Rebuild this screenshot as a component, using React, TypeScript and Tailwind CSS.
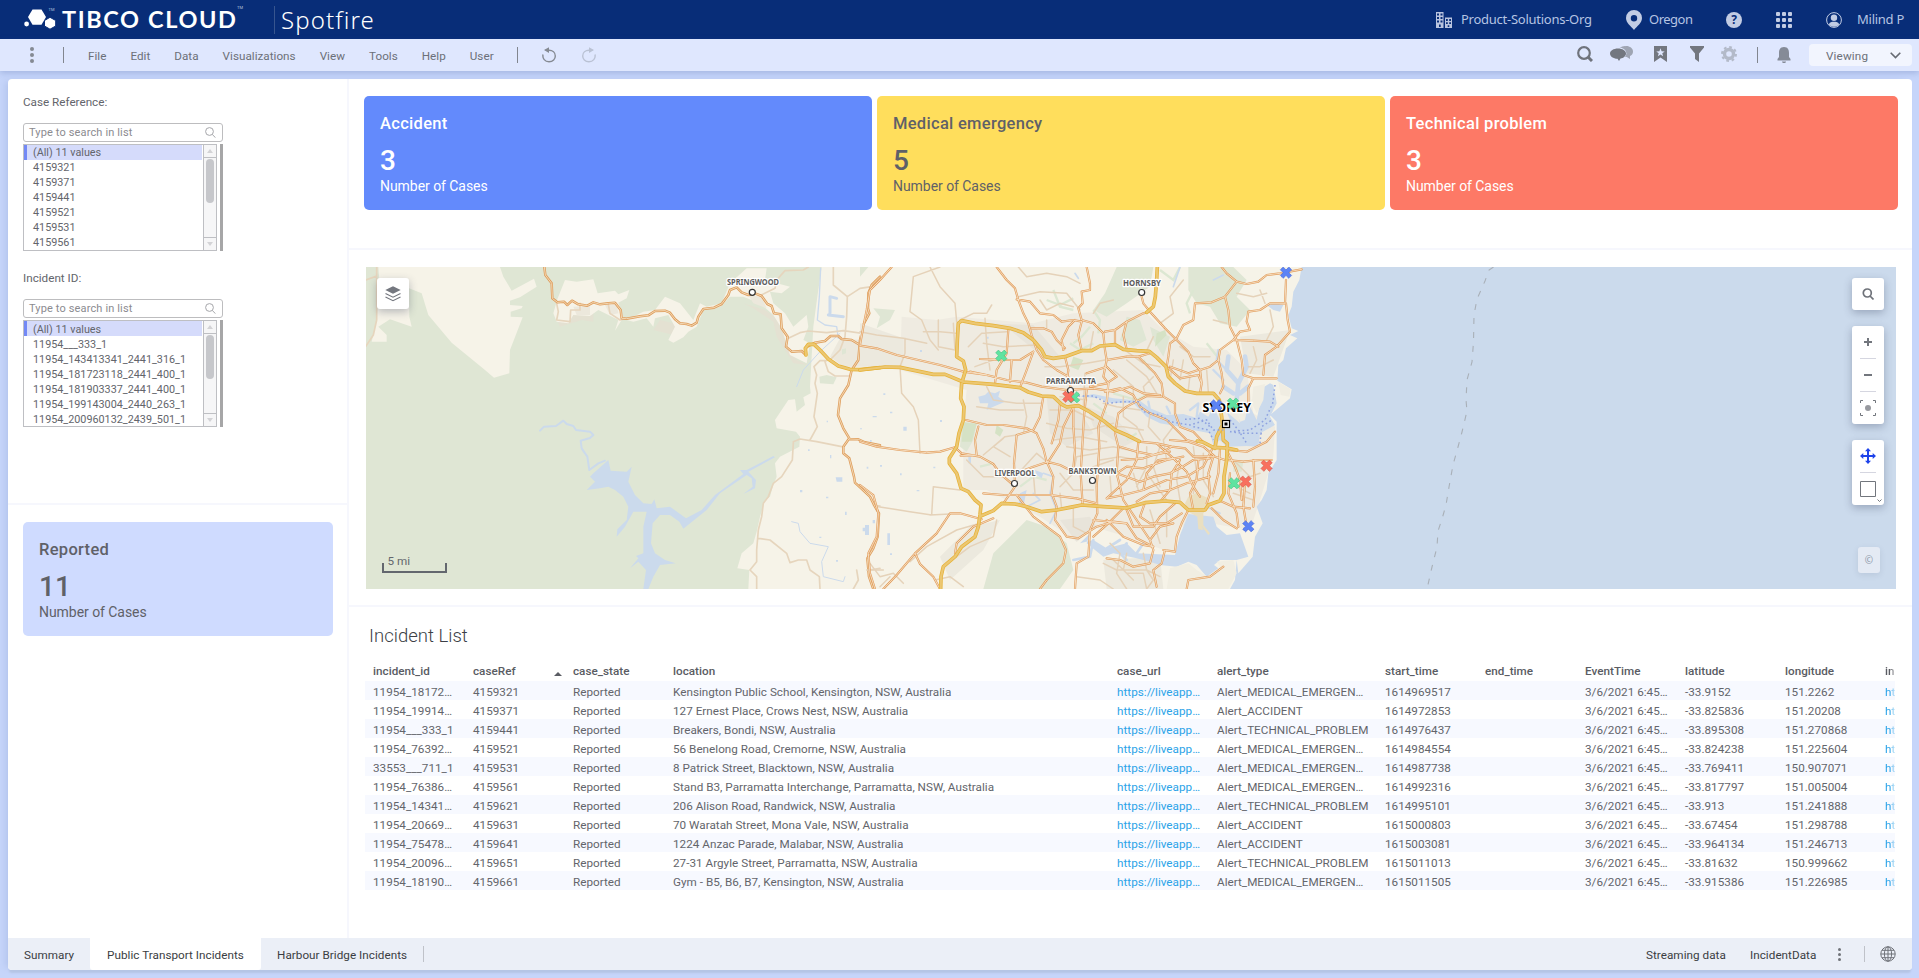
import type { ReactNode } from "react";

/* ---------- map drawing ---------- */

const WEST_HIGHWAYS = ["1338,285 1336,265 1345,253 1362,253 1380,270 1405,297 1435,318 1470,328 1500,329 1560,323"];

const WEST_ROADS = [
  "553,21 556,45 575,70 577,115 592,127 612,125 622,135 636,122 655,133 682,137 700,127 720,133 745,130 765,128 782,150 785,175 800,176 840,169 865,166 885,153 915,152 930,158 945,178 960,190 980,192 995,197 1010,188 1015,170 1030,147 1062,143 1085,132 1105,105 1110,90 1130,82 1145,97 1165,105 1185,100 1205,108 1222,132 1235,138 1242,160 1262,163 1265,205 1283,230 1278,260 1295,275 1325,273 1336,284",
  "1338,262 1365,248 1395,243 1412,228 1435,228 1445,237 1475,240 1495,252 1560,270",
  "1560,50 1535,75 1525,100 1524,145 1528,160 1512,190 1500,240 1495,300 1475,330 1465,375 1440,415 1434,465 1450,505 1468,535 1450,560 1450,580 1468,595 1482,650 1485,668 1530,710 1545,740 1557,760 1553,830 1540,865 1522,895 1527,950 1540,987",
  "1468,537 1495,538 1515,547 1560,556",
];

const WEST_MINOR = [
  "50,21 50,180 40,225 18,258",
  "18,60 50,48",
  "1200,107 1245,85 1250,60 1275,32 1330,30 1345,21",
  "1420,21 1420,75 1462,110 1460,170 1455,230 1440,270 1410,300",
  "1462,110 1500,85 1535,80",
  "1285,235 1320,218 1345,213 1400,218 1450,212 1560,228",
  "1400,302 1380,302 1362,320 1370,345 1365,370 1372,400 1362,470 1372,500 1350,540",
  "1395,305 1405,335 1425,348 1468,348",
  "1300,545 1320,537 1370,545 1445,560",
  "1300,548 1297,600 1265,650 1240,670 1225,710 1210,730 1205,770 1195,810 1190,870 1190,905 1170,930 1190,950 1190,987",
  "1195,835 1230,840 1280,880 1290,908 1315,900 1340,900 1350,930 1378,950 1380,987",
  "590,130 595,155 590,180 630,185 632,150 660,150 660,130",
  "745,133 750,160 780,180 800,175",
  "1480,987 1495,960 1490,930",
  "1540,735 1560,738",
  "1527,930 1560,925",
];

const EAST_HIGHWAYS = [
  "0,330 75,321 120,322 220,343 255,343 310,366 400,373 480,383 505,396 545,408 580,410 605,433 620,441 655,437 690,456 730,482 765,510 800,525 838,544",
  "242,987 243,950 250,920 285,890 305,860 345,830 355,800 360,765 363,735 345,720 325,695 303,685 290,640 268,610 268,595 290,560 297,520 310,480 312,440 302,415 305,370 317,330 310,303 290,290 292,240 295,190 305,182 345,190 400,197 450,205 490,218 520,240 545,270 555,290 580,295 615,290 665,272 695,272 720,258 765,254 790,268 830,272 868,274 890,292 918,320 925,350 945,370 975,393 1010,400 1060,400 1078,420 1085,470 1088,500 1090,540 1102,550 1100,600 1092,650 1092,700 1080,722 1045,735 1035,750 985,750 960,727 915,723 855,728 800,744 730,740 665,735 630,742 590,750 545,755 500,740 465,732 425,730 400,752 362,768",
  "892,21 890,60 886,110 880,140 860,157",
  "1085,500 1070,530 1065,565 1030,547 1012,543",
  "1065,562 1100,564 1130,570",
];

const EAST_ROADS = [
  "410,21 440,60 465,85 475,120 490,160 505,190 515,225 530,270 550,300 590,330 625,350 632,385",
  "680,21 690,70 690,90 665,95 668,130 655,145 665,180 700,190 730,220 735,270 740,300 730,350 745,370 740,430",
  "470,118 510,125 540,160 580,165 605,185 640,180 665,185",
  "515,205 550,205 575,215 590,240 615,265",
  "610,270 605,240 625,200 645,180",
  "735,215 765,210 800,185 850,160 870,155 915,205 950,240 985,275 1000,310 1020,330 1025,370",
  "845,110 850,130 870,155",
  "765,210 765,255",
  "920,320 925,290 930,250 950,235 970,195 1000,180 1005,130 1055,127 1095,110 1130,65 1160,72 1195,65 1220,45 1260,40 1325,28",
  "1130,65 1100,40 1085,21",
  "1095,110 1105,150 1110,200 1130,240 1145,300 1150,345 1180,355 1250,355",
  "1278,60 1275,130 1230,130 1200,150 1165,155 1160,185 1170,210 1140,215 1120,240 1080,270 1075,300 1050,320 1020,330",
  "1278,130 1283,180 1290,215 1250,260 1215,285 1210,345",
  "1120,240 1180,242 1230,245 1255,260",
  "1180,355 1165,385 1165,430",
  "1075,300 1085,340 1090,380 1080,400",
  "0,257 50,265 110,285 175,300 240,315 310,335 380,345 440,360 500,368 545,380 620,390 700,385 760,395 810,380 850,400 900,405",
  "0,545 50,560 120,570 200,578 240,575 285,562 305,580 360,590 400,612 420,640 465,680",
  "445,208 440,280 410,330 405,370",
  "360,297 440,300 480,300 520,275",
  "455,300 450,365",
  "550,410 540,470 520,510 470,525 462,610 465,670",
  "318,480 380,495 430,495 500,505 530,520 550,565 560,605",
  "302,587 350,585 345,540 355,500",
  "640,440 610,500 600,550 565,605 520,620 480,635 440,640",
  "640,440 640,500 645,570 640,625",
  "745,370 740,430 715,500 718,560 710,680 712,760 690,810 685,890 650,910 645,987",
  "560,605 600,615 640,635 700,640 770,640 800,620 850,625 920,600 970,590",
  "560,605 580,650 575,700 590,740 585,780 620,830 655,835 710,800 760,785 800,790",
  "370,700 430,705 500,705 570,705 650,715 710,730",
  "465,680 430,730",
  "470,705 520,770 560,800 600,830 618,870 610,910 560,960 540,987",
  "835,545 890,550 935,560 975,565 1000,590 1060,590",
  "735,395 780,385 820,405 840,440 870,460 920,480 950,510 980,540 1010,548",
  "835,290 885,340 905,370 910,410 945,430 945,460 960,500",
  "740,300 800,290 835,290 870,280",
  "680,340 740,320 770,350 740,370 690,380",
  "775,460 765,520 775,560 770,640 790,720 830,780 870,840 880,870",
  "600,430 595,480 575,550",
  "835,545 830,600 800,660 740,715",
  "770,640 840,665 880,650 930,640 960,625 1000,600 1050,595",
  "740,715 790,705 850,690 920,660 980,650 1030,620 1060,560",
  "830,725 870,700 930,690 980,670 1050,650",
  "890,550 940,595 980,635 1000,680 1020,710",
  "930,540 985,545 1030,560 1065,590 1095,600",
  "1060,590 1045,640 1050,700 1040,730",
  "1080,565 1075,640 1060,700",
  "1102,600 1150,605 1200,600 1235,600",
  "1102,570 1160,575 1200,555 1220,545 1245,515",
  "1110,640 1105,700 1130,760 1135,800",
  "1155,670 1150,740 1160,800",
  "1180,600 1185,680 1180,740",
  "1100,570 1125,620 1140,660 1145,720",
  "1080,722 1120,740 1170,745",
  "1055,745 1090,780 1130,805",
  "985,750 965,790 950,830 945,875 910,870",
  "945,730 900,770 880,800 820,800 800,750",
  "855,728 840,770 870,790 920,790 965,760",
  "915,870 905,910 880,930 890,980",
  "880,860 830,835 800,790 700,780",
  "880,870 870,910 820,920 780,900 740,895",
  "1090,920 1050,950 985,960 980,987",
  "95,21 60,60 30,90 20,150 10,200 0,255",
  "0,675 40,705 55,760 50,830 25,880 30,940 45,987",
  "365,778 300,760 270,760 230,820 165,880 110,945 70,987",
  "165,880 180,912 220,950 240,987",
  "285,880 290,850 340,800 400,775",
  "380,345 330,335",
  "920,320 960,355 1015,345 1025,370 1020,400",
  "680,390 672,470 668,540 662,640 668,735",
  "520,275 500,330 480,383",
  "615,290 625,330 620,370",
  "665,272 655,225 665,185",
  "800,268 790,225 800,185",
  "930,320 985,340 1015,330",
  "905,410 860,408 800,440 775,460",
  "960,500 1000,515 1030,547",
  "780,560 830,575 880,585 930,575",
  "785,600 850,595 910,575 935,560",
  "850,690 860,640 895,600 940,595",
  "1000,750 990,700 1010,660 1015,600",
  "900,725 930,690 935,640 960,600",
  "870,840 900,800 940,790",
  "740,780 790,830 850,855 880,860",
  "700,830 745,790 790,745",
];

const EAST_MINOR = [
  "240,21 160,50 150,155 185,180 210,240 235,270",
  "210,21 240,80 285,130 290,185",
  "190,215 240,215 290,220",
  "235,180 235,260 285,270 280,190",
  "0,215 50,225 130,235 200,250",
  "135,235 135,280 120,320 125,400 160,440 175,480 180,580",
  "300,180 340,160 380,160 395,135",
  "375,175 380,250 390,330",
  "325,260 365,220 440,215",
  "370,250 430,260 530,255",
  "345,320 400,300",
  "475,110 540,95 620,100 660,150",
  "475,21 500,50 560,40 620,50 660,70",
  "540,120 560,150 600,130 640,140",
  "370,585 435,530 470,525",
  "430,535 400,560 450,590",
  "320,600 370,650 440,650",
  "475,640 530,580 560,605",
  "215,765 220,680 300,690",
  "210,765 270,762",
  "55,740 150,755 215,765",
  "360,790 290,810 200,860 150,905",
  "290,890 330,860 400,830 410,780",
  "570,450 640,450 700,480",
  "560,490 620,505 690,510 760,490",
  "580,540 660,530 740,545",
  "600,640 640,690 700,690",
  "600,680 640,640 650,590 710,580",
  "720,600 780,590 830,600",
  "640,740 640,800 680,820",
  "700,620 760,600",
  "800,300 860,350 890,400",
  "780,260 850,310 900,320",
  "760,330 820,380 820,430",
  "675,340 670,440 690,450",
  "600,410 680,420",
  "790,410 790,470 830,500 850,540",
  "870,460 865,500 900,540",
  "860,560 860,620 830,680",
  "900,560 880,620 900,680",
  "940,500 910,540 920,600",
  "960,600 950,660 960,720",
  "1000,560 1010,640 1000,700",
  "1030,580 1030,660 1060,710",
  "860,640 920,720",
  "870,750 900,850",
  "920,750 920,830",
  "750,850 780,880 770,940 800,987",
  "730,910 770,930 860,930 900,950",
  "650,950 720,960 760,987",
  "760,900 800,940 850,940 860,987",
  "850,880 860,930 880,960 860,987",
  "800,880 790,930 820,960",
  "900,190 940,160 930,110 970,60",
  "700,160 720,130 760,120",
  "960,260 1000,290 1050,290",
  "940,300 930,360 960,380",
  "970,300 960,360",
  "1120,600 1170,650 1200,640",
  "1110,670 1170,700",
  "1120,700 1180,720",
  "1180,260 1190,300 1170,340",
  "1230,150 1240,200 1220,240",
  "1165,320 1200,320 1240,300",
  "30,910 60,950 100,940 130,970",
  "225,960 270,950 310,980",
  "20,930 70,930",
  "60,980 90,950",
  "555,320 600,320 680,310 735,300",
  "490,420 500,470 490,520",
  "380,380 400,420 470,430 545,430",
  "350,440 420,450 490,450",
  "620,560 690,570 760,560 830,575",
  "730,430 770,440 840,450",
  "740,500 790,500 850,510",
  "520,640 525,700",
  "600,700 605,745",
  "750,650 755,710",
  "820,640 835,690",
  "880,350 850,380 855,400",
  "700,215 690,270",
  "560,180 560,205",
  "1040,330 1045,395",
  "990,345 985,390",
  "880,230 860,272",
  "1060,180 1100,190",
  "1200,90 1215,130",
  "1130,100 1180,110 1220,100",
];

const FERRIES = [
  "655,408 700,408 745,430 790,425 835,425 850,455 900,465 930,485 990,495 1040,480 1060,510 1090,510",
  "975,478 1020,475 1050,500",
  "1245,375 1238,430 1215,480 1170,510 1110,515",
  "1110,480 1135,510 1160,550",
  "1200,550 1205,500 1235,480",
  "1110,515 1150,520 1210,520",
  "1000,500 1045,510 1060,540",
];

const pts = (s: string) => "M" + s.split(" ").join("L");

function Roads({ roads, outer, inner, wide, thin }: { roads: string[]; outer: string; inner?: string; wide: number; thin?: number }) {
  const d = roads.map(pts).join("");
  return (
    <g fill="none" strokeLinejoin="round" strokeLinecap="round">
      <path d={d} stroke={outer} strokeWidth={wide} />
      {inner && <path d={d} stroke={inner} strokeWidth={thin} />}
    </g>
  );
}

function Town({ x, y, dotX, dotY, width, name }: { x: number; y: number; dotX: number; dotY: number; width: number; name: string }) {
  return (
    <g>
      <circle cx={dotX} cy={dotY} r="3" fill="#fff" stroke="#333" strokeWidth="1.2" />
      <text x={x} y={y} textLength={width} lengthAdjust="spacingAndGlyphs" fontSize="8" fontWeight="700" fill="#5b5b5b" stroke="#fff" strokeWidth="2.4" strokeLinejoin="round" paintOrder="stroke" fontFamily="'Noto Sans', sans-serif">
        {name}
      </text>
    </g>
  );
}

const MARKERS: [number, number, string, string][] = [
  [920, 5.7, "#5c83f5", "#3d5fd0"],
  [635.3, 88.7, "#5fe3a0", "#39b877"],
  [708, 130.3, "#5fe3a0", "#39b877"],
  [702.3, 129.7, "#f8705f", "#cf4f42"],
  [850.3, 138.3, "#5c83f5", "#3d5fd0"],
  [867, 136.7, "#5fe3a0", "#39b877"],
  [900.6, 198.7, "#f8705f", "#cf4f42"],
  [868, 216.3, "#5fe3a0", "#39b877"],
  [879.6, 214.6, "#f8705f", "#cf4f42"],
  [882.3, 259.3, "#5c83f5", "#3d5fd0"],
];

function MapArt() {
  return (
    <svg viewBox="0 0 1530 322" className="block h-[322px] w-[1530px]">
      <rect width="1530" height="322" fill="#f6f3e8" />
      <g transform="translate(-6 -7) scale(.33333)">
        <path fill="#dfe6d4" d="M18,21H1385L1372,110L1360,200L1350,380L1352,400L1330,412L1335,435L1310,455L1305,418L1285,420L1245,480L1250,505L1308,515L1320,530L1318,560L1260,590L1245,610L1250,650L1238,680L1230,710L1215,720L1200,770L1190,815L1180,850L1145,880L1132,925L1168,930L1165,987H18Z" />
        <path fill="#f6f3e8" d="M55,21H420L430,50L455,92L522,56L530,80L480,112L450,122V135L488,138L485,145L452,155V170L488,172L450,270L448,340L402,353L375,330L275,248L205,165L185,100L147,85L148,170L155,200L90,178L55,200L80,225V245H35L50,180L58,60Z" />
        <path fill="#e4e1d2" d="M580,155L640,160L700,150L700,185L665,180L600,200ZM800,190L880,210L900,180L1000,205L940,225ZM1150,130L1215,150L1260,180L1280,230L1310,300L1345,315L1300,310L1250,230L1240,185L1180,145Z" />
        <path fill="#f6f3e8" d="M592,118L615,60L650,65L700,58L713,100L765,92L775,103L808,90L800,115L775,128L790,172L765,212L775,180L735,160L715,150L690,168L640,165L625,190L590,185L580,160ZM800,180L850,155L885,150L915,110L960,130L1000,180L1020,130L1040,140L1085,130L1110,70L1160,25H1220L1215,60L1290,80L1265,100L1230,95L1240,130L1275,160L1300,200L1340,165L1345,200L1330,240L1350,250L1340,310L1290,285L1265,205L1240,165L1200,130L1150,110L1110,110L1080,140L1030,150L1010,200L985,215L970,232L940,248L925,240L945,200L925,165L885,175L880,200L860,175L820,185Z" />
        <path fill="#ece8dc" d="M640,140L690,138L690,165L650,165ZM735,135L770,133L775,160L750,165ZM1165,105L1205,110L1220,145L1180,130ZM1440,235L1560,245V320L1450,320L1410,290Z" />
        <path fill="#dfe6d4" d="M1378,350L1400,345L1430,352L1420,373L1380,370ZM1446,268L1458,265V280L1446,284Z" />
        <path fill="#cbdaec" d="M700,640L745,600L752,632L800,635L815,620L805,665L825,705L850,730L875,732L883,718L890,745L930,740L978,775L1025,750L1065,705L1150,642L1140,630H1160L1240,588L1245,592L1165,635L1188,660L1185,685L1150,702L1178,680L1175,655L1160,645L1080,700L1040,750L970,806L958,785L930,765L900,765L878,790L873,850L885,880L915,900L947,910L900,915L880,950L865,987H850L858,930L835,905L810,925L835,895L828,888L850,880L850,800L860,755L820,755L795,800L770,830L772,808L800,780L805,740L790,710L765,690L745,680L720,685L680,690L705,665L690,650Z" />
        <g fill="none" stroke="#cbdaec" strokeLinejoin="round" strokeLinecap="round">
          <path strokeWidth="6" d="M540,512L552,500L588,498L610,482L620,492L640,498L648,510L690,515L700,525L690,534L662,542L665,565L682,590L688,630L715,610L735,602" />
          <path strokeWidth="3" d="M1310,380L1330,330L1380,275L1440,220M1295,785L1315,790L1320,815L1350,850L1405,860L1385,905L1390,950L1450,965L1455,950" />
          <path strokeWidth="4" d="M1382,25L1378,110L1372,180L1395,195L1430,200L1435,235" />
          <path strokeWidth="9" d="M1410,160V110L1430,115M1405,165L1450,170" />
        </g>
        <path fill="#cbdaec" d="M1427,652H1447V665H1430ZM1508,803H1515V814H1508ZM1320,690H1327V697H1320ZM1455,755H1460V765H1455ZM1398,710H1405V715H1398ZM1538,780H1545V790H1538ZM1344,568H1349V573H1344ZM1400,482H1404V487H1400ZM1428,900H1434V905H1428ZM1500,505H1506V508H1500ZM1538,468H1550V472H1538ZM1378,830H1384V834H1378ZM1410,585H1414V595H1410ZM1520,620H1525V626H1520Z" />
        <Roads roads={WEST_MINOR} outer="#e6d5bd" wide={5} />
        <Roads roads={WEST_ROADS} outer="#de9d5c" inner="#f3d8b4" wide={7.5} thin={3} />
        <Roads roads={WEST_HIGHWAYS} outer="#e6b237" inner="#ecc772" wide={11} thin={6.5} />
      </g>
      <g transform="translate(494 -7) scale(.33333)">
        <path fill="#efebe1" d="M125,170L230,180L290,170L520,190L640,160L850,150L900,200L1000,260L1100,270L1160,330L1180,460L1245,500L1240,590L1200,720L1170,810L1050,790L960,800L940,880L800,830L700,800L650,845L600,810L540,770L480,740L380,690L310,690L310,480L320,390L120,330Z" />
        <path fill="#ece9de" d="M0,190L130,235V325L0,310ZM730,900L900,890L910,987H740ZM1140,230L1290,210L1240,350L1160,340ZM240,890L330,800L420,780L370,870L270,960Z" />
        <path fill="#e8e4da" d="M360,190L520,195L600,290L560,300L450,210ZM680,440L760,470L830,540L790,560L700,500ZM560,410L640,420L700,520L620,560L570,520ZM600,780L690,770L710,800L650,845Z" />
        <path fill="#dfe6d4" d="M770,21H880L870,80L800,130L740,170L700,150L735,100ZM985,21H1120L1160,60L1130,110L1170,150L1130,200L1080,190L1050,140L1010,130L985,90ZM500,780L560,800L620,850L640,930L600,987H370L400,880L450,830ZM305,485L350,490L340,540L320,575L300,560ZM40,145L105,150L90,180L50,205L60,170ZM0,21H25L0,50ZM1120,600L1150,605L1145,635L1120,635ZM800,170L840,180L860,240L820,260L780,240ZM870,200L930,230L910,290L880,240Z" />
        <path fill="#d5e2c5" d="M310,487L350,492L335,545L305,545ZM640,290L670,300L655,330L630,320ZM410,495L430,510L420,530L405,520ZM890,220L915,210L920,225L885,260Z" />
        <path fill="none" stroke="#dce7d2" strokeWidth="7" d="M560,120L600,135L640,115M580,90L600,140L640,150M640,250L665,230L690,200M700,150L720,180L715,220M760,400L830,420L870,400M700,430L740,460M1000,90L980,130L990,160M850,300L870,330M1040,250L1080,300M900,30L940,60L960,21M630,250L660,270L700,250M800,540L830,520M360,620L400,610M480,680L520,650L560,660" />
        <path fill="#cbdaec" d="M1325,21L1318,60L1300,95L1295,140L1285,165L1295,205L1315,213L1290,225L1312,235L1278,265L1270,300L1255,315L1252,362L1295,388L1290,415L1260,440L1230,465L1250,485L1250,600L1225,640L1220,690L1205,720L1190,740L1208,790L1185,830L1178,890L1135,940L1130,900L1080,900L1062,915L1075,925L1040,950L1010,915L985,905L950,920L900,915L870,905L830,895L760,880L730,890L680,850L690,820L660,850L700,840L740,865L800,850L830,880L945,885L960,825L985,762L1060,770L1070,800L1100,825L1140,820L1165,890L1130,900L1125,960L1110,987H3600V21Z" />
        <path fill="#cbdaec" d="M1240,375L1250,430L1230,470L1245,495L1200,520L1195,560L1160,558L1100,560L1080,540L1060,555L1050,520L1000,510L960,500L900,490L860,470L840,450L820,430L750,428L720,415L660,410L700,402L760,415L840,422L870,445L920,465L970,462L1010,474L1020,455L1045,470L1060,440L1080,480L1110,480L1100,455L1140,490L1130,440L1155,480L1165,430L1190,480L1200,430L1180,400L1230,370Z" />
        <path fill="#cbdaec" d="M355,410L375,405L385,395L405,400L420,392L415,410L435,425L400,440L380,450L385,430L360,430ZM1220,135L1245,130L1270,135L1260,155L1240,150ZM525,630L550,640L545,655L530,645ZM480,700L500,690L490,740L475,735Z" />
        <g fill="none" stroke="#cbdaec" strokeLinejoin="round" strokeLinecap="round">
          <path strokeWidth="14" d="M1130,420L1135,370L1100,330L1105,290M1135,370L1160,320L1155,290M1120,400L1090,380M1140,400L1165,380" />
          <path strokeWidth="7" d="M1100,330L1070,300L1075,270M1090,360L1060,330M1010,470L1015,430L990,450M870,450L865,425M930,460L920,440" />
          <path strokeWidth="8" d="M700,840L690,890L640,900M740,865L780,840M830,880L850,850M800,850L780,880L800,900" />
          <path strokeWidth="5" d="M550,640L580,650L570,700L590,750L570,790M520,700L540,720L500,740M1040,740L1080,760M960,21L940,80M645,40L655,55M1060,60L1090,45" />
        </g>
        <path fill="#f0ede2" d="M1180,380L1215,372L1210,420L1190,460L1175,430ZM1255,365L1292,388L1288,410L1262,405ZM1130,455L1145,450L1155,480L1140,485ZM1080,450L1095,460L1090,480L1078,470Z" />
        <path fill="#f1eee2" d="M930,925L985,910L1010,930L1050,955L1085,925L1070,905L1120,900L1130,940L1105,987H920Z" />
        <path fill="#eadfc0" d="M985,710L1010,698L1045,715L1050,735L1030,760L1030,795L1050,820L1045,825L1025,798L1030,810L1015,808L1012,770L985,755L975,730Z" />
        <path fill="#cbdaec" d="M15,795H27V825H15ZM82,820H90V855H82ZM130,500H140V512H130ZM325,590H333V610H325ZM60,615H66V620H60ZM180,270H186V276H180ZM90,455H97V460H90ZM30,540H35V545H30ZM120,640H125V646H120ZM170,690H178V694H170ZM240,480H246V486H240ZM70,400H76V405H70ZM220,620H226V625H220ZM380,230H386V236H380ZM90,880H96V885H90Z" />
        <Roads roads={EAST_MINOR} outer="#e5d2b9" wide={4.5} />
        <Roads roads={EAST_ROADS} outer="#e19c5b" inner="#f8e4cb" wide={6.5} thin={2.6} />
        <Roads roads={EAST_HIGHWAYS} outer="#e6b237" inner="#ecc772" wide={11} thin={6.5} />
        <path d={FERRIES.map(pts).join("")} fill="none" stroke="#8ea2e0" strokeWidth="4.5" strokeDasharray="5 8" />
      </g>
      <path
        fill="none"
        stroke="#a9b0b8"
        strokeWidth="1.1"
        strokeDasharray="6 8"
        d="M1127.500,0L1123,3L1119,14L1111,32L1108,48L1107.500,75L1106,95L1101,113L1100,133L1101,144L1096,165L1092,180L1087,198L1083,220L1080,238L1076,252L1072,264L1071,280L1066,300L1061,322"
      />
      <Town name="SPRINGWOOD" x={361} y={18} width={52} dotX={386.3} dotY={25.3} />
      <Town name="HORNSBY" x={757} y={18.5} width={38} dotX={775.7} dotY={25.5} />
      <Town name="PARRAMATTA" x={680} y={116.5} width={50} dotX={704.5} dotY={123.5} />
      <Town name="LIVERPOOL" x={628.5} y={209.3} width={41} dotX={648.5} dotY={216.5} />
      <Town name="BANKSTOWN" x={702.5} y={206.5} width={48} dotX={726.5} dotY={213.5} />
      <text x="836.500" y="145" textLength="48.500" lengthAdjust="spacingAndGlyphs" fontSize="12" fontWeight="700" fill="#000" stroke="#fff" strokeWidth="2.500" paintOrder="stroke" fontFamily="'Noto Sans', sans-serif">
        SYDNEY
      </text>
      <rect x="856.500" y="153.500" width="7" height="7" fill="#fff" stroke="#000" strokeWidth="1.200" />
      <rect x="858.500" y="155.500" width="3" height="3" fill="#000" />
      {MARKERS.map(([x, y, fill, stroke]) => (
        <path
          key={`${x}-${y}`}
          transform={`translate(${x} ${y}) rotate(45)`}
          fill={fill}
          stroke={stroke}
          strokeWidth=".8"
          strokeDasharray="1 .7"
          d="M-2,-6H2V-2H6V2H2V6H-2V2H-6V-2H-2Z"
        />
      ))}
    </svg>
  );
}

function MapButtonGroup({ className, children }: { className: string; children: ReactNode }) {
  return <div className={`absolute flex w-8 flex-col items-center rounded-[3px] bg-white shadow-[0_3px_8px_rgba(40,50,80,0.3)] ${className}`}>{children}</div>;
}

function IncidentMap() {
  return (
    <div className="relative h-[322px] w-[1530px] overflow-hidden">
      <MapArt />
      <MapButtonGroup className="left-[11px] top-[11px] h-[31px] justify-center">
        <svg viewBox="0 0 16 16" className="size-4" fill="none" stroke="#74777f" strokeWidth="1.2">
          <path d="M8 .3L15.700 4L8 7.700L.3 4Z" fill="#74777f" stroke="none" />
          <path d="M.5 7.500L8 11.200L15.500 7.500M.5 11L8 14.700L15.500 11" />
        </svg>
      </MapButtonGroup>
      <MapButtonGroup className="right-3 top-[11px] h-8 justify-center">
        <svg viewBox="0 0 12 12" className="size-3" fill="none" stroke="#6e7279" strokeWidth="1.700">
          <circle cx="5.300" cy="5" r="4" />
          <path d="M8 8L11.500 11.500" />
        </svg>
      </MapButtonGroup>
      <MapButtonGroup className="right-3 top-[59px] h-[98px]">
        <svg viewBox="0 0 32 98" className="h-[98px] w-8" fill="none" stroke="#72767d">
          <path strokeWidth="2" d="M12 16H20M16 12V20M12 49H20" />
          <path strokeWidth="1" stroke="#d5d6e0" d="M8 32.500H24M8 65.500H24" />
          <path d="M8.500 77V74.500H11M21 74.500H23.500V77M23.500 87V89.500H21M11 89.500H8.500V87" />
          <circle cx="16" cy="82" r="3" fill="#97999f" stroke="none" />
        </svg>
      </MapButtonGroup>
      <MapButtonGroup className="right-3 top-[173px] h-[65px]">
        <svg viewBox="0 0 32 65" className="h-[65px] w-8" fill="none" stroke="#72767d">
          <path stroke="#1e43ea" strokeWidth="2" d="M9 16H23M16 9V23" />
          <path fill="#1e43ea" stroke="none" d="M16 8L19 11.300H13ZM16 24L13 20.700H19ZM8 16L11.300 13V19ZM24 16L20.700 19V13Z" />
          <path stroke="#d5d6e0" d="M8 32.500H24" />
          <path d="M8.500 41.500H23.500V56.500H8.500ZM25.500 59.500L27.500 61.500L29.500 59.500" />
        </svg>
      </MapButtonGroup>
      <div className="absolute right-4 top-[280px] flex h-[26px] w-[22px] items-center justify-center rounded-[3px] bg-[#e4eaf4] font-['Noto_Sans'] text-[10px] text-[#8d99aa] shadow-[0_2px_6px_rgba(40,50,80,0.1)]">©</div>
      <div className="absolute left-4 top-[288px] h-[18px] w-[65px] pl-[5.5px] text-[11.7px] leading-3 text-[#63666c]">
        5 mi
        <div className="-ml-[5.5px] -mt-[4px] h-[10px] border-2 border-t-0 border-[#63676e]" />
      </div>
    </div>
  );
}

/* ---------- header and toolbar ---------- */

function Header() {
  return (
    <header className="flex h-[39px] shrink-0 items-center bg-[#082d78] text-white">
      <svg viewBox="0 0 36 24" className="ml-[23px] h-6 w-9 shrink-0" fill="#fff">
        <path d="M9.500 1.500H18.500L23 9L18.500 16.800H9.500L5 9Z" />
        <path d="M27 9.300L32.700 12.500V18L27 21.200L21.500 18V12.500Z" stroke="#082d78" />
        <circle cx="3.600" cy="16" r="2.400" />
        <text x="25.500" y="3" fontSize="4" fontFamily="Roboto, sans-serif" fill="#b9c5de">TM</text>
      </svg>
      <div className="ml-[3px] w-[175px] shrink-0 whitespace-nowrap font-[Lato] text-[23.5px] font-bold leading-[37px] tracking-[1.6px]">TIBCO CLOUD</div>
      <span className="mb-[24px] w-[7px] font-[Roboto] text-[4px] leading-4 text-[#b9c5de]">TM</span>
      <span className="ml-[30px] h-7 w-px bg-[#37558f]" />
      <span className="ml-[6px] w-[100px] whitespace-nowrap font-['Noto_Sans'] text-[24px] font-light leading-[36px] tracking-[1.1px]">Spotfire</span>
      <div className="ml-auto flex items-center pr-[15px] font-['Noto_Sans'] text-[13px] tracking-[-0.26px] text-[#b5c4e3]">
        <svg viewBox="0 0 16 16" className="size-4" fill="#b9c4df">
          <path fillRule="evenodd" d="M0 0H7.500V16H0ZM1 1.500V3.500H3V1.500ZM4.500 1.500V3.500H6.500V1.500ZM1 5V7H3V5ZM4.500 5V7H6.500V5ZM1 8.500V10.500H3V8.500ZM4.500 8.500V10.500H6.500V8.500ZM3 12.500V15H4.700V12.500ZM9 5.500H16V16H9ZM10 7V9H11.800V7ZM13.200 7V9H15V7ZM10 10.200V12H11.800V10.200ZM13.200 10.200V12H15V10.200ZM11.700 13.300V15H13.300V13.300Z" />
        </svg>
        <span className="ml-[9px] w-[131px] whitespace-nowrap">Product-Solutions-Org</span>
        <svg viewBox="0 0 16 20" className="ml-[34px] h-5 w-4" fill="#c2cce4">
          <path fillRule="evenodd" d="M8 0A8 8 0 0 1 16 8C16 13 11 16 8 20C5 16 0 13 0 8A8 8 0 0 1 8 0ZM8 5A3.200 3.200 0 1 0 8 11.400A3.200 3.200 0 1 0 8 5Z" />
        </svg>
        <span className="ml-[7px] w-[43px] whitespace-nowrap tracking-[-0.5px]">Oregon</span>
        <span className="ml-[34px] flex size-4 items-center justify-center rounded-full bg-[#c2cce4] text-[12px] font-bold leading-4 text-[#082d78]">?</span>
        <svg viewBox="0 0 16 16" className="ml-[34px] size-4" fill="#c2cce4">
          {[0, 6, 12].map((y) => [0, 6, 12].map((x) => <rect key={`${x}-${y}`} x={x} y={y} width="4" height="4" rx="1" />))}
        </svg>
        <svg viewBox="0 0 16 16" className="ml-[34px] size-4" fill="#c2cce4">
          <circle cx="8" cy="8" r="7.400" fill="none" stroke="#c2cce4" />
          <circle cx="8" cy="5.800" r="3.200" />
          <path d="M2.800 12.500C3.500 10 5.500 9.800 8 9.800S12.500 10 13.200 12.500C10.500 15.500 5.500 15.500 2.800 12.500Z" />
        </svg>
        <span className="ml-[15px] w-[47px] whitespace-nowrap">Milind P</span>
      </div>
    </header>
  );
}

const MENU = ["File", "Edit", "Data", "Visualizations", "View", "Tools", "Help", "User"];

function Undo({ className, color }: { className: string; color: string }) {
  return (
    <svg viewBox="0 0 14 16" className={`h-4 w-3.5 ${className}`} fill="none" stroke={color} strokeWidth="1.400">
      <path d="M1 7.500C.2 11.500 3 14.800 7 14.800C11 14.800 13.300 12 13.300 9C13.300 5.500 10.500 3.200 7 3.200H3.500" />
      <path d="M2 3L7 .2V6Z" fill={color} stroke="none" />
    </svg>
  );
}

function Toolbar() {
  return (
    <div className="relative flex h-8 shrink-0 items-center bg-[#dfe7fe] text-[11.7px] leading-4 text-[#6c7078] shadow-[0_2px_6px_rgba(60,85,150,0.25)]">
      <svg viewBox="0 0 4 16" className="ml-[30px] h-4 w-1" fill="#858a93">
        <circle cx="2" cy="2" r="2" />
        <circle cx="2" cy="8" r="2" />
        <circle cx="2" cy="14" r="2" />
      </svg>
      <span className="ml-[29px] h-4 w-px bg-[#82868f]" />
      <nav className="ml-6 mt-[1px] flex gap-6 whitespace-nowrap tracking-[0.02px]">
        {MENU.map((m) => (
          <span key={m}>{m}</span>
        ))}
      </nav>
      <span className="ml-[23px] h-4 w-px bg-[#82868f]" />
      <Undo className="ml-[24px]" color="#858a93" />
      <Undo className="ml-[26px] -scale-x-100" color="#bac2d4" />
      <div className="ml-auto flex items-center">
        <svg viewBox="0 0 16 16" className="mb-0.5 size-4" fill="none" stroke="#6f737c">
          <circle cx="7" cy="7" r="5.800" strokeWidth="2.200" />
          <path d="M11 11L15 15" strokeWidth="3" />
        </svg>
        <svg viewBox="0 0 23 16" className="mb-0.5 ml-[17px] h-4 w-[23px]">
          <path fill="#9fa5b3" d="M16 0C20 0 23 2.400 23 5.500C23 7.500 22 9 20 10V13L16 10.500Z" />
          <ellipse cx="15" cy="5.500" rx="7" ry="5.500" fill="#9fa5b3" />
          <ellipse cx="8" cy="7.500" rx="8.400" ry="6.200" fill="#dfe7fe" />
          <path fill="#73777f" d="M8 2.500C12.500 2.500 16 4.700 16 7.500C16 10 13.500 12 10.500 12.600L9 15L7.500 12.800C3.200 12.600 0 10.400 0 7.500C0 4.700 3.500 2.500 8 2.500Z" />
        </svg>
        <svg viewBox="0 0 13 16" className="mb-0.5 ml-[21px] h-4 w-[13px]">
          <path fill="#73777f" d="M0 0H13V16L6.500 11.500L0 16Z" />
          <path fill="#dfe7fe" d="M6.500 2.300L7.600 5.300L10.700 5.400L8.300 7.300L9.100 10.300L6.500 8.600L3.900 10.300L4.700 7.300L2.300 5.400L5.400 5.300Z" />
        </svg>
        <svg viewBox="0 0 14 16" className="mb-0.5 ml-[23px] h-4 w-3.5" fill="#73777f">
          <path d="M0 0H14V1.500L9 7.500V16L5 13V7.500L0 1.500Z" />
        </svg>
        <svg viewBox="0 0 16 16" className="mb-0.5 ml-[17px] size-4" fill="none" stroke="#b3bac9">
          <circle cx="8" cy="8" r="4.500" strokeWidth="3.400" />
          <circle cx="8" cy="8" r="7" strokeWidth="2" strokeDasharray="2.700 2.800" />
        </svg>
        <span className="ml-5 h-4 w-px bg-[#82868f]" />
        <svg viewBox="0 0 14 16" className="ml-[19px] h-4 w-3.5" fill="#858b97">
          <path d="M7 0C11 0 12 3 12 6V10L13.500 12V13.500H.5V12L2 10V6C2 3 3 0 7 0ZM5 14.500H9C9 16.500 5 16.500 5 14.500Z" />
        </svg>
        <div className="ml-[18px] mr-[7px] flex h-[22px] w-[103px] items-center rounded bg-[#f2f5fe] pl-[17px] pr-[11px]">
          <span className="mt-[2px] tracking-[0.15px]">Viewing</span>
          <svg viewBox="0 0 11 7" className="ml-auto h-[7px] w-[11px]" fill="none" stroke="#666a72" strokeWidth="1.600">
            <path d="M.7 .7L5.500 5.500L10.300 .7" />
          </svg>
        </div>
      </div>
    </div>
  );
}

/* ---------- left column ---------- */

function ListFilter({ label, values, textClass }: { label: string; values: string[]; textClass: string }) {
  return (
    <div className="text-[#63656b]">
      <div className="h-[28px] text-[11.7px] leading-4">{label}</div>
      <div className="mt-[1px] flex h-[19px] w-[200px] items-center justify-between rounded-[3px] border border-[#bdbdbf] pl-[5px] pr-[6px]">
        <span className={`text-[11px] tracking-[0.14px] text-[#8b8b90] ${textClass}`}>Type to search in list</span>
        <svg viewBox="0 0 11 11" className="size-[11px]" fill="none" stroke="#a5a6aa">
          <circle cx="4.500" cy="4.500" r="3.900" />
          <path d="M7.300 7.500L10.500 10.700" />
        </svg>
      </div>
      <div className="mt-[2px] flex h-[107px] w-[200px] justify-between">
        <div className="flex w-[194px] border border-[#bebfc3]">
          <div className={`h-[105px] flex-1 overflow-hidden text-[10.8px] ${textClass}`}>
            <div className="mr-px h-[15px] border-l-[3px] border-[#7389f5] bg-[#d5dbfb] pl-[6px]">(All) 11 values</div>
            {values.map((v) => (
              <div key={v} className="h-[15px] pl-[9px]">
                {v}
              </div>
            ))}
          </div>
          <div className="flex w-[13px] flex-col items-center border-l border-[#bebfc3] bg-[#f6f6f7]">
            <svg viewBox="0 0 6 4" className="mt-[4px] h-1 w-1.5" fill="#d3d3d6">
              <path d="M3 0L6 4H0Z" />
            </svg>
            <span className="mt-[4px] h-px w-full bg-[#bebfc3]" />
            <span className="mt-px h-11 w-2 rounded-full bg-[#c6c7cb]" />
            <span className="mt-auto h-px w-full bg-[#bebfc3]" />
            <svg viewBox="0 0 6 4" className="my-[4px] h-1 w-1.5" fill="#d3d3d6">
              <path d="M3 4L6 0H0Z" />
            </svg>
          </div>
        </div>
        <div className="w-[3px] bg-[#a6a6a7]" />
      </div>
    </div>
  );
}

function Kpi({ title, value, className }: { title: string; value: number; className: string }) {
  return (
    <div className={`flex h-[114px] flex-col rounded-[5px] pt-[18px] ${className}`}>
      <span className="text-[16.5px] font-medium leading-5 tracking-[0.3px]">{title}</span>
      <span className="mt-[12px] text-[28px] font-medium leading-[30px]">{value}</span>
      <span className="text-sm leading-5 tracking-[-0.05px]">Number of Cases</span>
    </div>
  );
}

/* ---------- incident table ---------- */

const T = "Alert_TECHNICAL_PROBLEM";
const M = "Alert_MEDICAL_EMERGEN…";
const A = "Alert_ACCIDENT";
const ROWS = [
  ["11954_18172…", "4159321", "Kensington Public School, Kensington, NSW, Australia", M, "1614969517", "-33.9152", "151.2262"],
  ["11954_19914…", "4159371", "127 Ernest Place, Crows Nest, NSW, Australia", A, "1614972853", "-33.825836", "151.20208"],
  ["11954___333_1", "4159441", "Breakers, Bondi, NSW, Australia", T, "1614976437", "-33.895308", "151.270868"],
  ["11954_76392…", "4159521", "56 Benelong Road, Cremorne, NSW, Australia", M, "1614984554", "-33.824238", "151.225604"],
  ["33553___711_1", "4159531", "8 Patrick Street, Blacktown, NSW, Australia", M, "1614987738", "-33.769411", "150.907071"],
  ["11954_76386…", "4159561", "Stand B3, Parramatta Interchange, Parramatta, NSW, Australia", M, "1614992316", "-33.817797", "151.005004"],
  ["11954_14341…", "4159621", "206 Alison Road, Randwick, NSW, Australia", T, "1614995101", "-33.913", "151.241888"],
  ["11954_20669…", "4159631", "70 Waratah Street, Mona Vale, NSW, Australia", A, "1615000803", "-33.67454", "151.298788"],
  ["11954_75478…", "4159641", "1224 Anzac Parade, Malabar, NSW, Australia", A, "1615003081", "-33.964134", "151.246713"],
  ["11954_20096…", "4159651", "27-31 Argyle Street, Parramatta, NSW, Australia", T, "1615011013", "-33.81632", "150.999662"],
  ["11954_18190…", "4159661", "Gym - B5, B6, B7, Kensington, NSW, Australia", M, "1615011505", "-33.915386", "151.226985"],
];

const COLS = "grid grid-cols-[100px_100px_100px_444px_100px_168px_100px_100px_100px_100px_100px_10px] pl-2 whitespace-nowrap";

function IncidentTable() {
  return (
    <div className="ml-4 mt-[18px] w-[1530px] text-[11.7px] tracking-[0.02px] text-[#63656b]">
      <h2 className="pl-1 text-[18.5px] font-light leading-[22px] text-[#3c3f46]">Incident List</h2>
      <div className={`${COLS} mt-[17px] h-[17px] font-medium leading-[15px] text-[#5a5c63]`}>
        <span>incident_id</span>
        <span className="flex items-start justify-between pr-[11px]">
          caseRef
          <svg viewBox="0 0 8 4" className="mt-[8px] h-1 w-2" fill="#5a5c63">
            <path d="M4 0L8 4H0Z" />
          </svg>
        </span>
        <span>case_state</span>
        <span>location</span>
        <span>case_url</span>
        <span>alert_type</span>
        <span>start_time</span>
        <span>end_time</span>
        <span>EventTime</span>
        <span>latitude</span>
        <span>longitude</span>
        <span className="[mask-image:linear-gradient(to_right,black_50%,rgba(0,0,0,0.3))]">in</span>
      </div>
      {ROWS.map(([id, ref, loc, alert, start, lat, lon], i) => (
        <div key={ref} className={`${COLS} h-[19px] leading-[23px] ${i % 2 === 0 ? "bg-[#f7f9ff]" : "bg-white"}`}>
          <span>{id}</span>
          <span>{ref}</span>
          <span>Reported</span>
          <span>{loc}</span>
          <span className="text-[#2ba3e8]">https://liveapp…</span>
          <span>{alert}</span>
          <span>{start}</span>
          <span />
          <span>3/6/2021 6:45…</span>
          <span>{lat}</span>
          <span>{lon}</span>
          <span className="text-[#2ba3e8] [mask-image:linear-gradient(to_right,black_50%,rgba(0,0,0,0.2))]">ht</span>
        </div>
      ))}
    </div>
  );
}

function TabBar() {
  return (
    <footer className="flex h-8 shrink-0 items-center overflow-hidden rounded-b bg-[#ebeff7] text-[11.7px] leading-4 tracking-[0.04px] text-[#3a3d42]">
      <span className="w-[82px] pl-4 pt-[2px]">Summary</span>
      <span className="h-8 w-[171px] rounded-b-[3px] bg-white pl-[17px] leading-[34px]">Public Transport Incidents</span>
      <span className="w-[162px] whitespace-nowrap pl-4 pt-[2px]">Harbour Bridge Incidents</span>
      <span className="h-4 w-px bg-[#bfc2c9]" />
      <span className="ml-auto w-[104px] pt-[2px]">Streaming data</span>
      <span className="w-[88px] pt-[2px]">IncidentData</span>
      <svg viewBox="0 0 3 13" className="h-[13px] w-[3px]" fill="#707379">
        <circle cx="1.500" cy="1.500" r="1.500" />
        <circle cx="1.500" cy="6.500" r="1.500" />
        <circle cx="1.500" cy="11.500" r="1.500" />
      </svg>
      <span className="ml-[23px] h-4 w-px bg-[#bfc2c9]" />
      <svg viewBox="0 0 16 16" className="mb-px ml-[15px] mr-4 size-4" fill="none" stroke="#6f7279">
        <circle cx="8" cy="8" r="7.200" />
        <ellipse cx="8" cy="8" rx="3.600" ry="7.200" />
        <path d="M8 .8V15.200M.8 8H15.200M2 4.300H14M2 11.700H14" />
      </svg>
    </footer>
  );
}

export default function App() {
  return (
    <div className="flex h-[978px] w-[1919px] flex-col overflow-hidden bg-[#c6d5fa] font-[Roboto,sans-serif]">
      <Header />
      <Toolbar />
      <div className="mx-2 mt-2 flex h-[891px] w-[1904px] shrink-0 flex-col rounded bg-white shadow-[0_4px_2px_-1px_#b5c5e5,-5px_0_6px_-2px_#b5c6ee]">
        <main className="flex h-[859px]">
          <aside className="flex w-[341px] shrink-0 flex-col border-r-2 border-[#f6f7fd]">
            <section className="flex h-[426px] flex-col border-b-2 border-[#f6f7fd] pl-[15px] pt-[15px]">
              <ListFilter label="Case Reference:" textClass="leading-4" values={["4159321", "4159371", "4159441", "4159521", "4159531", "4159561"]} />
              <div className="h-[19px]" />
              <ListFilter
                label="Incident ID:"
                textClass="leading-[18px]"
                values={["11954___333_1", "11954_143413341_2441_316_1", "11954_181723118_2441_400_1", "11954_181903337_2441_400_1", "11954_199143004_2440_263_1", "11954_200960132_2439_501_1"]}
              />
            </section>
            <section className="pl-[15px] pr-[14px] pt-[17px]">
              <Kpi title="Reported" value={11} className="bg-[#cfdbff] pl-4 text-[#5f6168]" />
            </section>
          </aside>
          <div className="flex flex-1 flex-col">
            <section className="grid h-[171px] shrink-0 grid-cols-3 items-start gap-[5px] border-b-2 border-[#f6f7fd] pl-[15px] pr-[14px] pt-[17px]">
              <Kpi title="Accident" value={3} className="bg-[#638afc] pl-4 text-white" />
              <Kpi title="Medical emergency" value={5} className="bg-[#ffde5c] pl-4 text-[#5f6168]" />
              <Kpi title="Technical problem" value={3} className="bg-[#fd7966] pl-4 text-white" />
            </section>
            <section className="h-[357px] shrink-0 border-b-2 border-[#f6f7fd] pl-[17px] pt-[17px]">
              <IncidentMap />
            </section>
            <IncidentTable />
          </div>
        </main>
        <TabBar />
      </div>
    </div>
  );
}
